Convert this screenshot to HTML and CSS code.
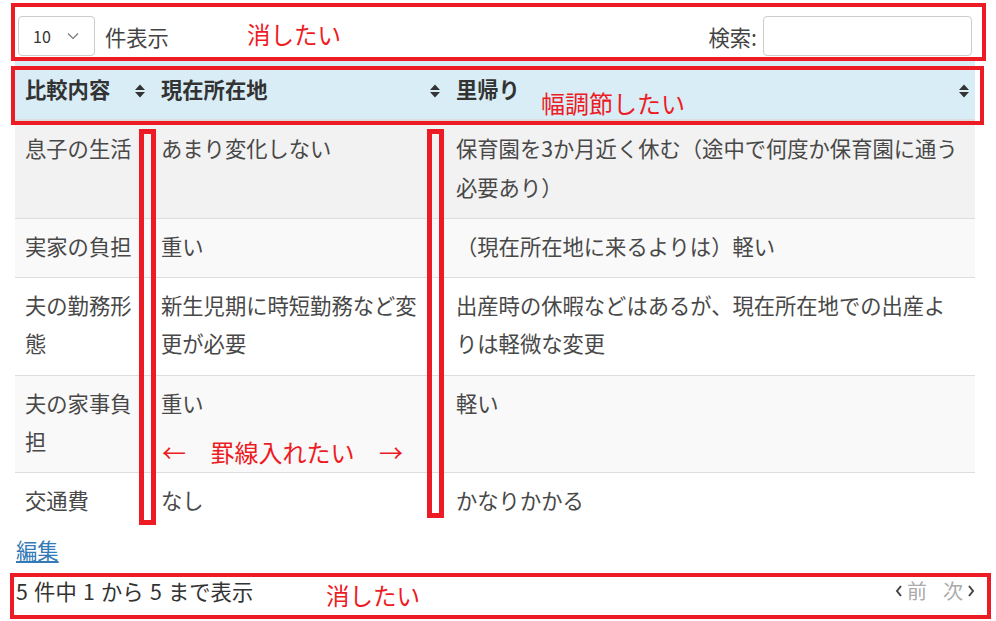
FILE: index.html
```html
<!DOCTYPE html>
<html lang="ja">
<head>
  <meta charset="UTF-8">
  <meta name="viewport" content="width=device-width, initial-scale=1.0">
  <title>比較表</title>
  <link rel="stylesheet" href="styles.css">
</head>
<body>
  <div class="page">
    <div class="toolbar">
      <div class="length">
        <span class="select">10
          <svg class="chev" width="12" height="8" viewBox="0 0 12 8"><path d="M1 1.5 L6 6.5 L11 1.5" fill="none" stroke="#777" stroke-width="1.2"/></svg>
        </span>
        <span class="label">件表示</span>
      </div>
      <div class="search">
        <span class="label">検索:</span>
        <span class="input"></span>
      </div>
    </div>

    <table class="compare">
      <colgroup>
        <col class="c1">
        <col class="c2">
        <col class="c3">
      </colgroup>
      <thead>
        <tr>
          <th>比較内容<svg class="sort" width="10" height="16" viewBox="0 0 10 16"><path d="M0 7 L5 1.5 L10 7 Z M0 9 L5 14.5 L10 9 Z" fill="#333"/></svg></th>
          <th>現在所在地<svg class="sort" width="10" height="16" viewBox="0 0 10 16"><path d="M0 7 L5 1.5 L10 7 Z M0 9 L5 14.5 L10 9 Z" fill="#333"/></svg></th>
          <th>里帰り<svg class="sort" width="10" height="16" viewBox="0 0 10 16"><path d="M0 7 L5 1.5 L10 7 Z M0 9 L5 14.5 L10 9 Z" fill="#333"/></svg></th>
        </tr>
      </thead>
      <tbody>
        <tr class="hover">
          <td>息子の生活</td>
          <td>あまり変化しない</td>
          <td>保育園を3か月近く休む（途中で何度か保育園に通う必要あり）</td>
        </tr>
        <tr class="odd">
          <td>実家の負担</td>
          <td>重い</td>
          <td>（現在所在地に来るよりは）軽い</td>
        </tr>
        <tr>
          <td>夫の勤務形態</td>
          <td>新生児期に時短勤務など変更が必要</td>
          <td>出産時の休暇などはあるが、現在所在地での出産よりは軽微な変更</td>
        </tr>
        <tr class="odd">
          <td>夫の家事負担</td>
          <td>重い</td>
          <td>軽い</td>
        </tr>
        <tr>
          <td>交通費</td>
          <td>なし</td>
          <td>かなりかかる</td>
        </tr>
      </tbody>
    </table>

    <a class="edit" href="#">編集</a>

    <div class="info-row">
      <span class="info">5 件中 1 から 5 まで表示</span>
      <span class="paging">
        <svg width="8" height="14" viewBox="0 0 8 14"><path d="M6 2 L2 7 L6 12" fill="none" stroke="#444" stroke-width="2"/></svg>
        <span class="pg">前</span>
        <span class="pg">次</span>
        <svg width="8" height="14" viewBox="0 0 8 14"><path d="M2 2 L6 7 L2 12" fill="none" stroke="#444" stroke-width="2"/></svg>
      </span>
    </div>
  </div>

  <!-- red annotations drawn over the screenshot -->
  <div class="mark box-top"></div>
  <div class="mark box-head"></div>
  <div class="mark box-foot"></div>
  <div class="mark line-a"></div>
  <div class="mark line-b"></div>
  <div class="note note-top">消したい</div>
  <div class="note note-head">幅調節したい</div>
  <div class="note note-line"><span>←</span><span>罫線入れたい</span><span>→</span></div>
  <div class="note note-foot">消したい</div>
</body>
</html>
```

FILE: styles.css
```css
body {
  margin: 0;
  font-family: "Noto Sans CJK JP", "Noto Sans", sans-serif;
  color: #333;
  background: #fff;
  position: relative;
  height: 621px;
  overflow: hidden;
}
.page {
  width: 960px;
  padding: 16px 15px 0;
  font-size: 21.3px;
}
.toolbar {
  display: flex;
  justify-content: space-between;
  align-items: center;
  height: 40px;
  padding: 0 3px;
  margin-bottom: 5px;
}
.length, .search {
  display: flex;
  align-items: center;
}
.select {
  box-sizing: border-box;
  width: 77px;
  height: 40px;
  border: 1px solid #ccc;
  border-radius: 4px;
  display: flex;
  align-items: center;
  justify-content: space-between;
  padding: 0 15px 0 14px;
  font-size: 16px;
}
.label {
  margin-left: 10px;
  color: #444;
}
.search .label {
  margin: 0 6px 0 0;
}
.input {
  box-sizing: border-box;
  width: 209px;
  height: 40px;
  border: 1px solid #ccc;
  border-radius: 4px;
}
.compare {
  width: 960px;
  table-layout: fixed;
  border-collapse: collapse;
  line-height: 38.3px;
}
.c1 { width: 136px; }
.c2 { width: 295px; }
.c3 { width: 529px; }
.compare th {
  position: relative;
  text-align: left;
  padding: 9px 30px 11px 10px;
  background: #d9edf7;
  border-bottom: 2px solid #ddd;
  font-weight: bold;
}
.compare th .sort {
  position: absolute;
  right: 6px;
  top: 22px;
}
.compare td {
  padding: 8px 10px 12px;
  border-top: 1px solid #ddd;
  vertical-align: top;
  color: #484848;
}
.compare tbody tr:first-child td {
  border-top: 0;
}
.compare tr.hover td { background: #f2f2f2; }
.compare tr.odd td { background: #f9f9f9; }
.edit {
  display: block;
  width: max-content;
  margin: -1px 0 0 1px;
  line-height: 38px;
  color: #337ab7;
  text-decoration: underline;
}
.info-row {
  display: flex;
  justify-content: space-between;
  align-items: center;
  line-height: 38px;
  margin-top: 3px;
  padding-left: 1px;
}
.info {
  word-spacing: 1.5px;
}
.paging {
  display: flex;
  align-items: center;
  gap: 4px;
  color: #aaa;
  font-size: 20px;
}
.paging .pg + .pg {
  margin-left: 12px;
}
.mark {
  position: absolute;
  box-sizing: border-box;
  border: 4px solid #ed1c24;
}
.box-top { left: 11px; top: 3px; width: 975px; height: 58px; }
.box-head { left: 11px; top: 66px; width: 973px; height: 59px; }
.box-foot { left: 10px; top: 573px; width: 981px; height: 46px; }
.line-a { left: 139px; top: 129px; width: 17px; height: 396px; border-width: 5px; }
.line-b { left: 427px; top: 129px; width: 17px; height: 389px; border-width: 5px; }
.note {
  position: absolute;
  color: #ed1c24;
  font-size: 23.5px;
  line-height: 30px;
  white-space: nowrap;
}
.note-top { left: 247px; top: 19px; }
.note-head { left: 541px; top: 88px; font-size: 24px; }
.note-line {
  left: 162px;
  top: 437px;
  width: 241px;
  display: flex;
  justify-content: space-between;
  font-size: 24px;
}
.note-foot { left: 326px; top: 580px; }
```
